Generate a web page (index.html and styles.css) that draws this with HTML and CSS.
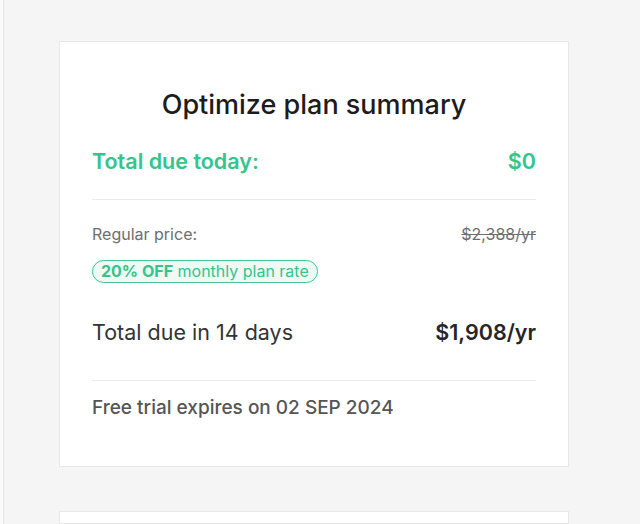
FILE: index.html
```html
<!DOCTYPE html>
<html lang="en">
<head>
    <meta charset="UTF-8">
    <meta name="viewport" content="width=device-width, initial-scale=1.0">
    <title>Optimize plan summary</title>
    <link rel="stylesheet" href="styles.css">
</head>
<body>
    <div class="page">
        <div class="side-strip"></div>
        <main class="content">
            <section class="card summary">
                <h1>Optimize plan summary</h1>
                <div class="row due-today">
                    <span>Total due today:</span>
                    <span>$0</span>
                </div>
                <hr>
                <div class="row regular">
                    <span>Regular price:</span>
                    <s>$2,388/yr</s>
                </div>
                <div class="badge"><b>20% OFF</b> monthly plan rate</div>
                <div class="row due-later">
                    <span>Total due in 14 days</span>
                    <strong>$1,908/yr</strong>
                </div>
                <hr class="second">
                <p class="trial">Free trial expires on 02 SEP 2024</p>
            </section>
            <section class="card next"></section>
        </main>
    </div>
</body>
</html>
```

FILE: styles.css
```css
body {
    font-family: Inter, "Noto Sans", sans-serif;
    margin: 0;
    padding: 0;
    background-color: #f5f5f5;
    color: #1f1f1f;
    overflow: hidden;
}
.page {
    display: flex;
    height: 524px;
}
.side-strip {
    width: 3px;
    background-color: #fafafa;
    border-right: 1px solid #e6e6e6;
}
.content {
    display: flex;
    flex-direction: column;
    gap: 44px;
    padding: 41px 0 0 55px;
}
.card {
    width: 510px;
    box-sizing: border-box;
    background-color: white;
    border: 1px solid #e8e8e8;
}
.summary {
    padding: 47px 32px 46px;
}
.next {
    height: 60px;
}
h1 {
    margin: 0 0 26px;
    text-align: center;
    font-size: 27px;
    line-height: 32px;
    font-weight: 500;
    color: #1c1c1c;
}
.row {
    display: flex;
    justify-content: space-between;
    align-items: center;
}
.due-today {
    font-size: 21.5px;
    line-height: 28px;
    font-weight: 600;
    color: #34c48c;
}
hr {
    border: none;
    border-top: 1px solid #ebebeb;
    margin: 24px 0 24px;
}
hr.second {
    margin: 34px 0 15px;
}
.regular {
    font-size: 16px;
    line-height: 20px;
    color: #6e6e6e;
}
.regular s {
    color: #6e6e6e;
}
.badge {
    display: inline-block;
    margin-top: 16px;
    padding: 0 8px;
    height: 23px;
    line-height: 21px;
    box-sizing: border-box;
    border: 1.5px solid #3ec592;
    border-radius: 12px;
    background-color: #effaf5;
    color: #34c48c;
    font-size: 16px;
}
.badge b {
    font-weight: 700;
}
.due-later {
    margin-top: 35px;
    font-size: 21.5px;
    line-height: 28px;
    color: #333;
}
.due-later strong {
    font-weight: 600;
    color: #262626;
}
.trial {
    margin: 0;
    font-size: 19px;
    line-height: 24px;
    font-weight: 500;
    color: #555;
}
```
